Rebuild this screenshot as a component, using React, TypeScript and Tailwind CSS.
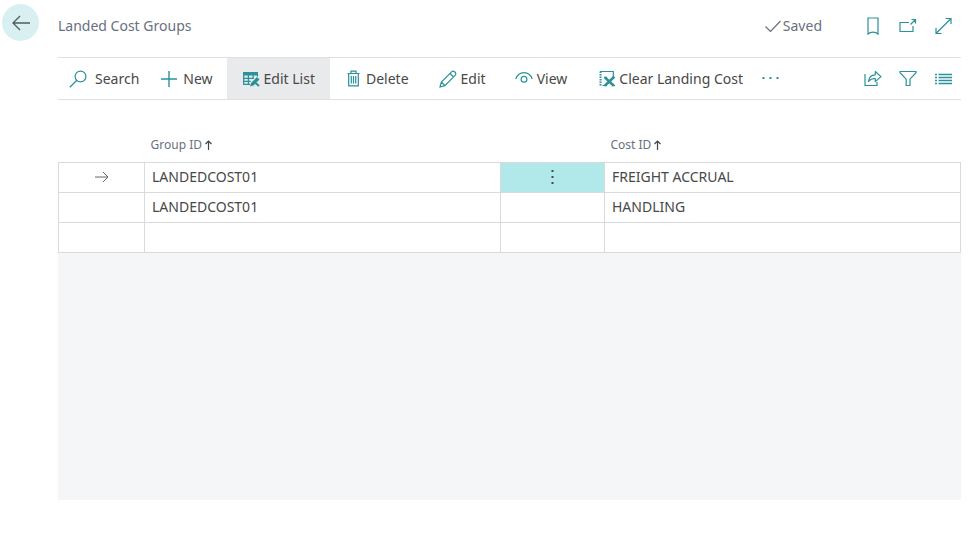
import type { ReactNode } from "react";

type IconProps = { w?: number; h?: number; children: ReactNode; className?: string };

function Icon({ w = 18, h = 18, children, className = "" }: IconProps) {
  return (
    <svg
      width={w}
      height={h}
      viewBox={`0 0 ${w} ${h}`}
      fill="none"
      stroke="currentColor"
      strokeWidth="1.2"
      aria-hidden="true"
      className={`shrink-0 ${className}`}
    >
      {children}
    </svg>
  );
}

const icons = {
  search: (
    <Icon>
      <circle cx="11.5" cy="6.5" r="5.4" />
      <path d="M7.8 10.3 0.8 17.2" />
    </Icon>
  ),
  plus: (
    <Icon w={16} h={16}>
      <path d="M8 0v16M0 8h16" strokeWidth="1.4" />
    </Icon>
  ),
  editList: (
    <Icon w={17} h={16}>
      <path d="M0 1h15v3.5H0z" fill="currentColor" stroke="none" />
      <path d="M.7 4v9.3H7M.7 7.4h10M.7 10.3h7M5.4 4v9.3M10.2 4v4M14.4 4v1.5" strokeWidth="1.3" />
      <path d="m7 15.5 1-3.5 6-6 2.5 2.5-6 6z" fill="currentColor" stroke="none" />
      <path d="m12 11.5 4 3.5" strokeWidth="2" />
    </Icon>
  ),
  trash: (
    <Icon w={13} h={17}>
      <path d="M.5 3.5h12M4 3.2V1.1h5v2.1M1.7 3.5v12.4h9.6V3.5" />
      <path d="M4.3 6v7.5M6.5 6v7.5M8.7 6v7.5" />
    </Icon>
  ),
  pencil: (
    <Icon w={18} h={18}>
      <path d="m1 17 1.4-5L12.8 1.6c1.7-1.7 5.3 1.7 3.5 3.5L5.9 15.6zM2.4 12l3.5 3.6M11 3.5 14.5 7" />
    </Icon>
  ),
  eye: (
    <Icon w={18} h={16}>
      <path d="M.7 8C2.2 3.8 5.3 1.6 9 1.6S15.8 3.8 17.3 8" />
      <circle cx="9" cy="8.3" r="2.9" />
    </Icon>
  ),
  clear: (
    <Icon w={16} h={17}>
      <path d="M1.5 1.5V16" strokeWidth="2" strokeDasharray="1.5 1" />
      <path d="M1 1.5h13.3V7M3.5 15.5h2" />
      <path d="m6 7.5 8.5 8M14.5 7.5 6 15.5" strokeWidth="2.5" />
      <path d="M5 7.5h3M13 7.5h3M5 15.5h3M13 15.5h3" strokeWidth="1.3" />
    </Icon>
  ),
  more: (
    <Icon w={17} h={17}>
      <path d="M.5 8h2M7.5 8h2M14.5 8h2" strokeWidth="2" />
    </Icon>
  ),
  share: (
    <Icon w={18} h={17}>
      <path d="M1 4v11.5h12V12" />
      <path d="M4.5 11.5C4.8 7.3 7 5 11.3 4.8V1.5L17 6.6l-5.7 5V8.5c-3-.1-5.1.7-6.8 3z" strokeLinejoin="round" />
    </Icon>
  ),
  filter: (
    <Icon w={18} h={17}>
      <path d="M1 1.5h16v1.2L11 9.2v6.3H7.2V9.2L1 2.7z" />
    </Icon>
  ),
  list: (
    <Icon w={17} h={17}>
      <path d="M3.5 4.5H17M3.5 7.5H17M3.5 10.5H17M3.5 13.5H17" strokeWidth="1.4" />
      <path d="M0 4.5h2M0 7.5h2M0 10.5h2M0 13.5h2" strokeWidth="1.4" />
    </Icon>
  ),
  bookmark: (
    <Icon w={12} h={18}>
      <path d="M1 1h10v16c-2.5-2.6-7.5-2.6-10 0z" />
    </Icon>
  ),
  popOut: (
    <Icon w={18} h={16}>
      <path d="M10 4.5H1v9h13V8M11.5 6.5 16 2M12.5 1.5h4v4" />
    </Icon>
  ),
  expand: (
    <Icon w={17} h={18}>
      <path d="M1.5 16 15.5 2M10.5 1.5H16V7M1 11v5.500h5.500" />
    </Icon>
  ),
};

type Action = { label: string; icon: ReactNode; style: string };

const actions: Action[] = [
  { label: "Search", icon: icons.search, style: "gap-2 pl-[11px] pr-3" },
  { label: "New", icon: icons.plus, style: "gap-1.5 pl-2.5 pr-3.5" },
  { label: "Edit List", icon: icons.editList, style: "gap-1 bg-[#e9eaec] pl-4 pr-[15px]" },
  { label: "Delete", icon: icons.trash, style: "gap-1.5 pl-[17px] pr-4" },
  { label: "Edit", icon: icons.pencil, style: "gap-1 pl-3.5 pr-[15px]" },
  { label: "View", icon: icons.eye, style: "gap-1 pl-3.5 pr-4" },
  { label: "Clear Landing Cost", icon: icons.clear, style: "gap-1 pl-4 pr-[11px]" },
];

const rows = [
  { group: "LANDEDCOST01", cost: "FREIGHT ACCRUAL", selected: true },
  { group: "LANDEDCOST01", cost: "HANDLING", selected: false },
  { group: "", cost: "", selected: false },
];

function IconButton({ label, children }: { label: string; children: ReactNode }) {
  return (
    <button type="button" aria-label={label} className="flex w-[18px] items-center justify-center text-[#2b919a]">
      {children}
    </button>
  );
}

function ColumnHeader({ label }: { label: string }) {
  return (
    <th scope="col" className="pl-1.5 text-left text-xs font-normal text-[#697080]">
      <span className="flex items-center gap-[3px]">
        {label}
        <Icon w={7} h={10} className="text-[#444]">
          <path d="M3.5 10V1M.5 4l3-3 3 3" />
        </Icon>
      </span>
    </th>
  );
}

export default function App() {
  return (
    <div className="flex min-h-screen bg-white pb-[43px] font-['Noto_Sans','Open_Sans',sans-serif] text-sm text-[#484848]">
      <aside className="w-[58px] shrink-0 pl-0.5 pt-1">
        <button
          type="button"
          aria-label="Back"
          className="flex size-[37px] items-center justify-center rounded-full bg-[#d8f0f1] text-[#505c5c]"
        >
          <Icon w={18} h={16}>
            <path d="M18 8H1M8 1 1 8l7 7" strokeWidth="1.3" />
          </Icon>
        </button>
      </aside>

      <main className="mr-2.5 flex min-w-0 flex-1 flex-col">
        <header className="flex h-[57px] items-center justify-between pb-1.5 pr-[9px] text-[#697080]">
          <h1>Landed Cost Groups</h1>
          <div className="flex items-center">
            <span className="mr-[42px] flex items-center gap-0.5">
              <Icon w={16} h={12}>
                <path d="m.5 6.5 5 5L15.5 1" />
              </Icon>
              Saved
            </span>
            <div className="flex gap-[17px]">
              <IconButton label="Bookmark">{icons.bookmark}</IconButton>
              <IconButton label="Open in new window">{icons.popOut}</IconButton>
              <IconButton label="Expand">{icons.expand}</IconButton>
            </div>
          </div>
        </header>

        <div role="toolbar" aria-label="Actions" className="flex h-[43px] shrink-0 justify-between border-y border-[#dfe0e3] pr-[9px]">
          <div className="flex">
            {actions.map(({ label, icon, style }) => (
              <button key={label} type="button" className={`flex items-center whitespace-nowrap ${style}`}>
                <span className="text-[#2b919a]">{icon}</span>
                {label}
              </button>
            ))}
            <button type="button" aria-label="More options" className="flex items-center px-2 text-[#2b919a]">
              {icons.more}
            </button>
          </div>
          <div className="flex gap-[17px]">
            <IconButton label="Share">{icons.share}</IconButton>
            <IconButton label="Filter">{icons.filter}</IconButton>
            <IconButton label="Show list">{icons.list}</IconButton>
          </div>
        </div>

        <div className="bg-white">
          <table className="w-full table-fixed border-collapse">
            <colgroup>
              <col className="w-[86px]" />
              <col />
              <col className="w-[104px]" />
              <col />
            </colgroup>
            <thead>
              <tr className="h-[62px] [&>th]:pt-7">
                <th aria-label="Current row" />
                <ColumnHeader label="Group ID" />
                <th aria-label="Row actions" />
                <ColumnHeader label="Cost ID" />
              </tr>
            </thead>
            <tbody>
              {rows.map((row, index) => (
                <tr key={index} className="h-[30px] [&>td]:border [&>td]:border-[#d8dade]">
                  <td>
                    {row.selected && (
                      <Icon w={14} h={12} className="mx-auto text-[#666]">
                        <path d="M0 6h13M8 1l5 5-5 5" strokeWidth="1" />
                      </Icon>
                    )}
                  </td>
                  <td className="pl-[7px]">{row.group}</td>
                  <td className={row.selected ? "bg-[#b1e8ea]" : ""}>
                    {row.selected && (
                      <button type="button" aria-label="Show more options" className="mx-auto flex px-2">
                        <Icon w={3} h={16}>
                          <path d="M1.5 1v2M1.5 7v2M1.5 13v2" strokeWidth="2" />
                        </Icon>
                      </button>
                    )}
                  </td>
                  <td className="pl-[7px]">{row.cost}</td>
                </tr>
              ))}
            </tbody>
          </table>
        </div>
        <div className="flex-1 bg-[#f5f6f8]" />
      </main>
    </div>
  );
}
